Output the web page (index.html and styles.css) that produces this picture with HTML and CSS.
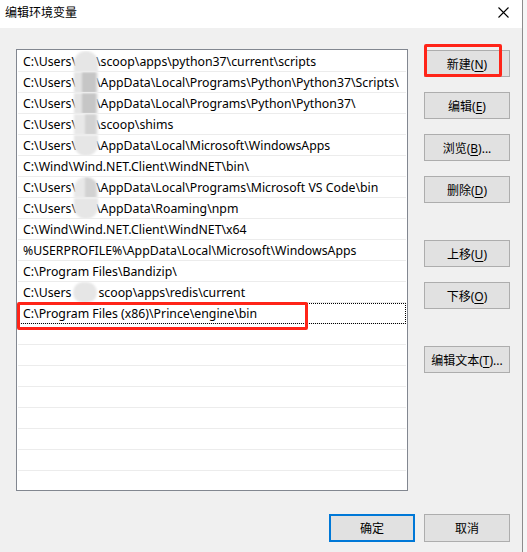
FILE: index.html
```html
<!DOCTYPE html>
<html lang="zh-CN">
<head>
    <meta charset="UTF-8">
    <meta name="viewport" content="width=device-width, initial-scale=1.0">
    <title>编辑环境变量</title>
    <link rel="stylesheet" href="styles.css">
</head>
<body>
    <div class="dialog">
        <div class="titlebar">
            <span class="title">编辑环境变量</span>
            <svg class="close" width="11" height="11" viewBox="0 0 11 11">
                <path d="M0.5 0.5 L10.5 10.5 M10.5 0.5 L0.5 10.5" stroke="#000" stroke-width="1.1" fill="none"/>
            </svg>
        </div>

        <div class="content">
            <div class="main">
                <div class="list">
                    <div class="row">C:\Users\<span class="mask top"></span>\scoop\apps\python37\current\scripts</div>
                    <div class="row">C:\Users\<span class="mask dark"></span>\AppData\Local\Programs\Python\Python37\Scripts\</div>
                    <div class="row">C:\Users\<span class="mask dark"></span>\AppData\Local\Programs\Python\Python37\</div>
                    <div class="row">C:\Users\<span class="mask mid"></span>\scoop\shims</div>
                    <div class="row">C:\Users\<span class="mask bottom"></span>\AppData\Local\Microsoft\WindowsApps</div>
                    <div class="row">C:\Wind\Wind.NET.Client\WindNET\bin\</div>
                    <div class="row">C:\Users\<span class="mask top mid"></span>\AppData\Local\Programs\Microsoft VS Code\bin</div>
                    <div class="row">C:\Users\<span class="mask bottom"></span>\AppData\Roaming\npm</div>
                    <div class="row">C:\Wind\Wind.NET.Client\WindNET\x64</div>
                    <div class="row">%USERPROFILE%\AppData\Local\Microsoft\WindowsApps</div>
                    <div class="row">C:\Program Files\Bandizip\</div>
                    <div class="row">C:\Users<span class="mask round"></span>scoop\apps\redis\current</div>
                    <div class="row selected">C:\Program Files (x86)\Prince\engine\bin</div>
                    <div class="row"></div>
                    <div class="row"></div>
                    <div class="row"></div>
                    <div class="row"></div>
                    <div class="row"></div>
                    <div class="row"></div>
                    <div class="row"></div>
                    <div class="row"></div>
                </div>

                <div class="actions">
                    <button class="btn">新建(<u>N</u>)</button>
                    <button class="btn">编辑(<u>E</u>)</button>
                    <button class="btn">浏览(<u>B</u>)...</button>
                    <button class="btn">删除(<u>D</u>)</button>
                    <button class="btn group">上移(<u>U</u>)</button>
                    <button class="btn">下移(<u>O</u>)</button>
                    <button class="btn group">编辑文本(<u>T</u>)...</button>
                </div>
            </div>

            <div class="footer">
                <button class="btn default">确定</button>
                <button class="btn">取消</button>
            </div>
        </div>

        <!-- red marks drawn over the dialog -->
        <div class="mark mark-new"></div>
        <div class="mark mark-path"></div>
    </div>
</body>
</html>
```

FILE: styles.css
```css
html, body {
    margin: 0;
    height: 100%;
    background: #f6f6f6;
    overflow: hidden;
}

body {
    font-family: "Noto Sans", "Noto Sans CJK SC", sans-serif;
    font-size: 12px;
    color: #000;
}

.dialog {
    position: relative;
    width: 523px;
    height: 552px;
    box-sizing: border-box;
    border-right: 1px solid #8c8c8c;
    background: #f0f0f0;
    display: flex;
    flex-direction: column;
}

.titlebar {
    height: 28px;
    flex: none;
    background: #fff;
    display: flex;
    justify-content: space-between;
    align-items: flex-start;
}

.title {
    padding: 5px 0 0 5px;
    line-height: 16px;
}

.close {
    margin: 7px 13px 0 0;
}

.content {
    padding: 21px 12px 0 16px;
    display: flex;
    flex-direction: column;
}

.main {
    display: flex;
    gap: 16px;
}

/* path list */
.list {
    width: 392px;
    height: 442px;
    box-sizing: border-box;
    border: 1px solid #828790;
    background: #fff;
    padding: 1px;
    overflow: hidden;
    font-size: 12.3px;
}

.row {
    height: 21px;
    box-sizing: border-box;
    border-bottom: 1px solid #ececec;
    padding-left: 5px;
    display: flex;
    align-items: center;
    white-space: nowrap;
    overflow: hidden;
    line-height: 20px;
    padding-top: 1px;
}

.row.selected {
    outline: 1px dotted #000;
    outline-offset: -1px;
}

.mask {
    flex: none;
    align-self: stretch;
    width: 24px;
    margin: -1px -2px -1px -2px;
    background: #e6e6e6;
    filter: blur(1px);
}
.mask.top { border-radius: 12px 12px 0 0; margin-top: -1px; }
.mask.bottom { border-radius: 0 0 12px 12px; }
.mask.round { border-radius: 12px; margin-left: 2px; margin-right: 1px; }
.mask.dark { background: linear-gradient(90deg, #e4e4e4 35%, #c6c6c6 35%, #c6c6c6 90%, #e4e4e4 90%); }
.mask.mid { background: linear-gradient(90deg, #e8e8e8 45%, #d2d2d2 45%, #d2d2d2 90%, #e8e8e8 90%); }

/* side buttons */
.actions {
    width: 86px;
    padding-top: 1px;
    display: flex;
    flex-direction: column;
    gap: 15px;
}

.btn {
    font: inherit;
    color: #000;
    width: 86px;
    height: 27px;
    padding: 0;
    background: #e1e1e1;
    border: 1px solid #adadad;
    box-sizing: border-box;
}

.btn u {
    text-underline-offset: 2px;
}

.actions .group {
    margin-top: 22px;
}

.footer {
    display: flex;
    justify-content: flex-end;
    gap: 9px;
    margin-top: 23px;
}

.footer .btn {
    height: 28px;
}

.btn.default {
    border: 2px solid #0078d7;
}

.mark {
    position: absolute;
    border: 3px solid #ff2418;
    border-radius: 2px;
    box-sizing: border-box;
}

.mark-new {
    left: 424px;
    top: 44px;
    width: 78px;
    height: 33px;
}

.mark-path {
    left: 17px;
    top: 302px;
    width: 291px;
    height: 28px;
}
```
